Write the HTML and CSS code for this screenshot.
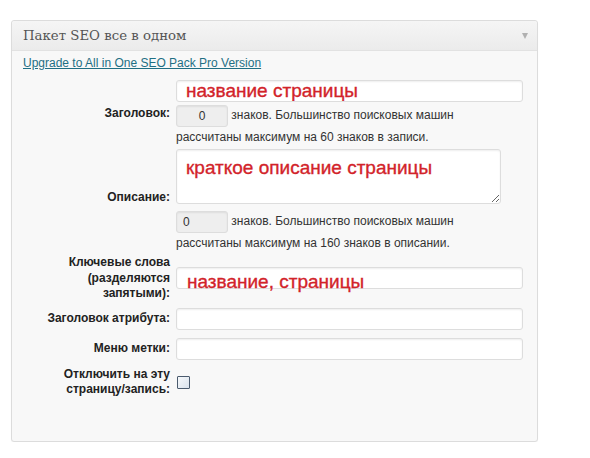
FILE: index.html
```html
<!DOCTYPE html>
<html lang="ru">
  <head>
    <meta charset="UTF-8" />
    <meta name="viewport" content="width=device-width, initial-scale=1.0" />
    <title>Пакет SEO все в одном</title>
    <link rel="stylesheet" href="styles.css">
  </head>
  <body>
    <div class="postbox">
      <div class="hndle">
        <span>Пакет SEO все в одном</span>
        <span class="toggle"></span>
      </div>
      <div class="inside">
        <a class="upgrade" href="#">Upgrade to All in One SEO Pack Pro Version</a>

        <div class="row row-title">
          <label class="lbl">Заголовок:</label>
          <div class="fld">
            <input class="txt red" type="text" value="название страницы">
            <div class="count-line">
              <input class="count center" type="text" value="0" readonly> знаков. Большинство поисковых машин<br>рассчитаны максимум на 60 знаков в записи.
            </div>
          </div>
        </div>

        <div class="row row-desc">
          <label class="lbl">Описание:</label>
          <div class="fld">
            <textarea class="area red">краткое описание страницы</textarea>
            <div class="count-line">
              <input class="count" type="text" value="0" readonly> знаков. Большинство поисковых машин<br>рассчитаны максимум на 160 знаков в описании.
            </div>
          </div>
        </div>

        <div class="row row-keys">
          <label class="lbl">Ключевые слова<br>(разделяются<br>запятыми):</label>
          <div class="fld">
            <!-- text runs a bit past the box here, like in the screenshot -->
            <div class="txt red low">название, страницы</div>
          </div>
        </div>

        <div class="row row-attr">
          <label class="lbl">Заголовок атрибута:</label>
          <div class="fld">
            <input class="txt" type="text">
          </div>
        </div>

        <div class="row row-menu">
          <label class="lbl">Меню метки:</label>
          <div class="fld">
            <input class="txt" type="text">
          </div>
        </div>

        <div class="row row-off">
          <label class="lbl">Отключить на эту<br>страницу/запись:</label>
          <div class="fld">
            <input class="check" type="checkbox">
          </div>
        </div>
      </div>
    </div>
  </body>
</html>
```

FILE: styles.css
```css
body {
  margin: 0;
  background-color: #fff;
  font-family: "Liberation Sans", Arial, sans-serif;
  font-size: 12px;
  color: #333;
}

.postbox {
  box-sizing: border-box;
  width: 527px;
  height: 422px;
  margin: 20px 0 0 11px;
  background: #f8f8f8;
  border: 1px solid #dcdcdc;
  border-radius: 3px;
  box-shadow: 0 1px 1px rgba(0, 0, 0, 0.04);
}

.hndle {
  display: flex;
  align-items: center;
  justify-content: space-between;
  height: 29px;
  padding: 0 9px 0 11px;
  background: linear-gradient(to bottom, #f5f5f5, #ebebeb);
  border-bottom: 1px solid #e2e2e2;
  border-radius: 3px 3px 0 0;
  font-family: "DejaVu Serif", Georgia, serif;
  font-size: 13.3px;
  color: #555;
}

/* little collapse arrow */
.toggle {
  width: 0;
  height: 0;
  border-left: 3.5px solid transparent;
  border-right: 3.5px solid transparent;
  border-top: 6px solid #b0b0b0;
}

.inside {
  padding: 4px 14px 0 11px;
}

.upgrade {
  display: block;
  width: max-content;
  line-height: 16px;
  color: #1f6f84;
  text-decoration: underline;
}

.row {
  display: flex;
  align-items: center;
}

.lbl {
  flex: none;
  width: 147px;
  margin-right: 6px;
  text-align: right;
  font-weight: bold;
  color: #222;
  line-height: 15.5px;
}

.fld {
  flex: 1;
}

.row-title { margin-top: 9px; }
.row-desc { margin-top: 2px; }
.row-keys { margin-top: 2px; }
.row-attr { margin-top: 6px; }
.row-menu { margin-top: 8px; }
.row-off { margin-top: 7px; }

.row-desc .lbl {
  padding-bottom: 6px;
}

.txt,
.area,
.count {
  box-sizing: border-box;
  margin: 0;
  border: 1px solid #dddddd;
  border-radius: 3px;
  background: #fff;
  box-shadow: inset 0 1px 2px rgba(0, 0, 0, 0.07);
  font-family: "Liberation Sans", Arial, sans-serif;
  outline: none;
}

.txt {
  display: block;
  width: 100%;
  height: 22px;
  padding: 0 9px;
  font-size: 12px;
  color: #333;
}

.red {
  font-size: 19px;
  color: #d2232a;
  -webkit-text-stroke: 0.35px #d2232a;
}

.txt.low {
  padding: 0 10px;
  line-height: 28px;
  white-space: nowrap;
}

.area {
  display: block;
  width: 325px;
  height: 55px;
  padding: 7px 9px 0;
  line-height: 22px;
  resize: both;
}

.count-line {
  margin-top: 3px;
  line-height: 20px;
}

.row-desc .count-line {
  margin-top: 7px;
}

.count {
  width: 52px;
  height: 22px;
  padding: 0 6px;
  vertical-align: middle;
  background: #eeeeee;
  font-size: 12px;
  color: #333;
}

.count.center {
  text-align: center;
}

.check {
  appearance: none;
  -webkit-appearance: none;
  display: block;
  width: 13px;
  height: 13px;
  margin: 0 0 0 1px;
  border: 1px solid #4b5b6e;
  border-radius: 1px;
  background: linear-gradient(135deg, #f7f9fb, #d9e2ec);
}
```
